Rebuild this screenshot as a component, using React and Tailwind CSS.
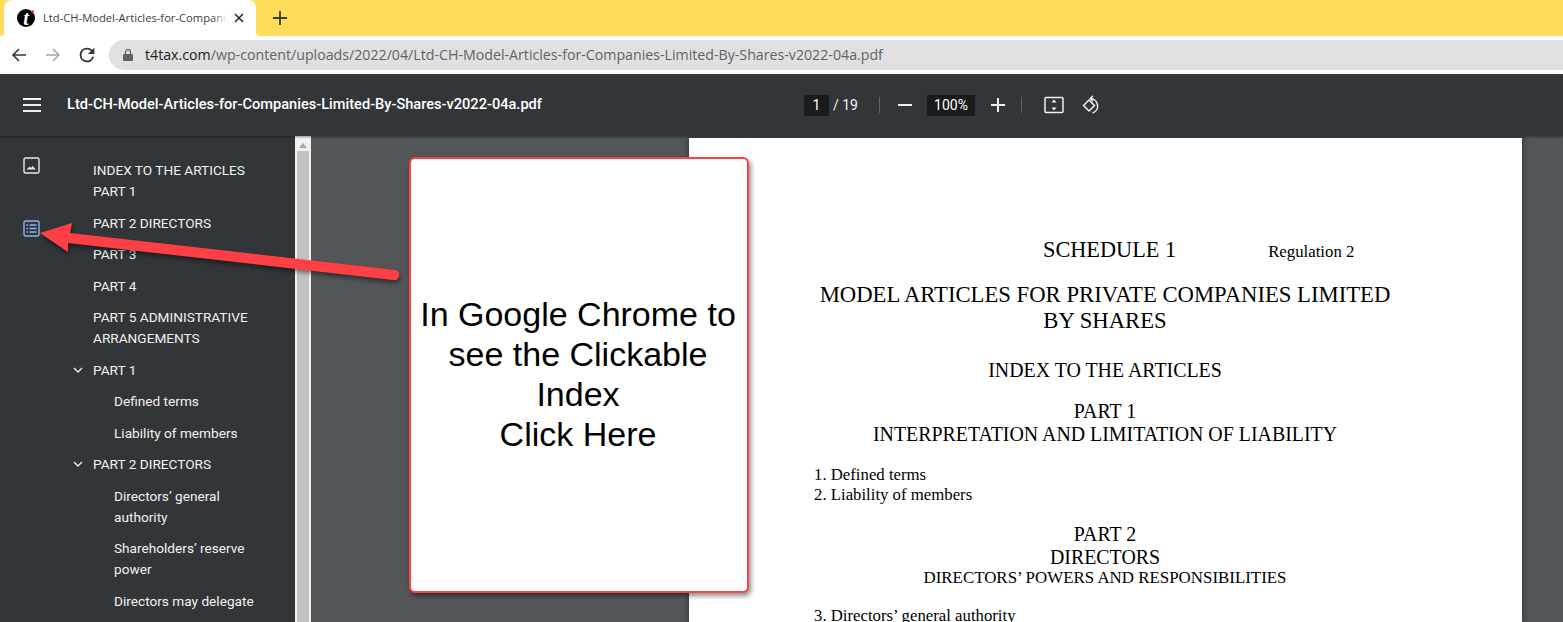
const outline = [
  { label: "INDEX TO THE ARTICLES", cls: "mt-[24px] pl-[93px]" },
  { label: "PART 1", cls: "pl-[93px]" },
  { label: "PART 2 DIRECTORS", cls: "mt-[11px] pl-[93px]" },
  { label: "PART 3", cls: "mt-[10px] pl-[93px]" },
  { label: "PART 4", cls: "mt-[11px] pl-[93px]" },
  { label: "PART 5 ADMINISTRATIVE ARRANGEMENTS", cls: "mt-[10px] pl-[93px] pr-[30px]" },
  { label: "PART 1", cls: "mt-[11px] pl-[93px]", open: true },
  { label: "Defined terms", cls: "mt-[10px] pl-[114px]" },
  { label: "Liability of members", cls: "mt-[11px] pl-[114px]" },
  { label: "PART 2 DIRECTORS", cls: "mt-[10px] pl-[93px]", open: true },
  { label: "Directors’ general authority", cls: "mt-[11px] pl-[114px] pr-[60px]" },
  { label: "Shareholders’ reserve power", cls: "mt-[10px] pl-[114px] pr-[40px]" },
  { label: "Directors may delegate", cls: "mt-[11px] pl-[114px] pr-[30px]" },
];

function BackIcon({ color }) {
  return (
    <svg width="16" height="16" viewBox="0 0 16 16" fill="none" stroke={color} strokeWidth="1.6">
      <path d="M15 8H2M8 2L2 8l6 6" />
    </svg>
  );
}

function BrowserBar() {
  return (
    <div>
      <div className="h-[36px] bg-[#ffdd5b] flex items-end pl-[4px]">
        <div className="relative h-[36px] w-[252px] bg-white rounded-t-[8px] flex items-center pl-[13px] pr-[10px]">
          <div className="absolute left-[-4px] bottom-0 w-[4px] h-[4px] bg-white" />
          <div className="absolute left-[-4px] bottom-0 w-[4px] h-[4px] bg-[#ffdd5b] rounded-br-[4px]" />
          <div className="absolute right-[-4px] bottom-0 w-[4px] h-[4px] bg-white" />
          <div className="absolute right-[-4px] bottom-0 w-[4px] h-[4px] bg-[#ffdd5b] rounded-bl-[4px]" />
          <div className="relative w-[18px] h-[18px] rounded-full bg-black flex items-center justify-center shrink-0 text-white font-['Liberation_Serif'] italic font-bold text-[20px] leading-none">
            t
            <span className="absolute right-[1px] top-[1px] w-[3px] h-[3px] rounded-full bg-[#e33]" />
          </div>
          <div className="relative ml-[8px] w-[184px] overflow-hidden whitespace-nowrap text-[11.2px] text-[#3c4043] font-['Open_Sans',sans-serif]">
            Ltd-CH-Model-Articles-for-Compani
            <div className="absolute right-0 top-0 bottom-0 w-[14px] bg-gradient-to-r from-transparent to-white" />
          </div>
          <svg className="ml-[6px] shrink-0" width="12" height="12" viewBox="0 0 12 12" stroke="#222" strokeWidth="1.5">
            <path d="M2 2l8 8M10 2l-8 8" />
          </svg>
        </div>
        <svg className="ml-[17px] mb-[11px]" width="14" height="14" viewBox="0 0 14 14" stroke="#3b3b30" strokeWidth="1.8">
          <path d="M7 0v14M0 7h14" />
        </svg>
      </div>
      <div className="h-[38px] bg-white flex items-center pl-[11px]">
        <BackIcon color="#333" />
        <div className="ml-[18px] rotate-180 flex">
          <BackIcon color="#a8a8a8" />
        </div>
        <svg className="ml-[15px]" width="22" height="22" viewBox="0 0 24 24" fill="#333">
          <path d="M17.65 6.35A7.95 7.95 0 0 0 12 4a8 8 0 1 0 7.73 10h-2.08A6 6 0 1 1 12 6c1.66 0 3.14.69 4.22 1.78L13 11h7V4l-2.35 2.35z" />
        </svg>
        <div className="ml-[11px] flex-1 h-[30px] mr-[-30px] rounded-full bg-[#e0e0e0] flex items-center pl-[14px] text-[14.2px] font-['Open_Sans',sans-serif]">
          <svg width="10" height="12" viewBox="0 0 10 12" fill="#5f6368">
            <path d="M1 5h8a1 1 0 0 1 1 1v5a1 1 0 0 1-1 1H1a1 1 0 0 1-1-1V6a1 1 0 0 1 1-1z" />
            <path d="M2.5 5V3.2a2.5 2.5 0 0 1 5 0V5" fill="none" stroke="#5f6368" strokeWidth="1.2" />
          </svg>
          <span className="ml-[12px] text-[#202124]">t4tax.com</span>
          <span className="text-[#5f6368]">/wp-content/uploads/2022/04/Ltd-CH-Model-Articles-for-Companies-Limited-By-Shares-v2022-04a.pdf</span>
        </div>
      </div>
    </div>
  );
}

function PdfToolbar() {
  return (
    <div className="relative z-10 h-[62px] bg-[#323639] shadow-[0_1px_2px_rgba(0,0,0,0.4)] flex items-center text-white font-['Roboto',sans-serif] text-[14px]">
      <svg className="ml-[23px] shrink-0" width="18" height="14" viewBox="0 0 18 14" fill="#f1f1f1">
        <path d="M0 0h18v2H0zM0 6h18v2H0zM0 12h18v2H0z" />
      </svg>
      <div className="ml-[26px] w-[737px] shrink-0 font-medium text-[14.6px] whitespace-nowrap">
        Ltd-CH-Model-Articles-for-Companies-Limited-By-Shares-v2022-04a.pdf
      </div>
      <div className="w-[25px] h-[21px] bg-[#191b1c] flex items-center justify-center">1</div>
      <div className="ml-[4px] text-[#f1f1f1]">/ 19</div>
      <div className="ml-[21px] w-px h-[16px] bg-[#5f6368]" />
      <svg className="ml-[18px]" width="14" height="14" viewBox="0 0 14 14" fill="#f1f1f1">
        <path d="M0 6h14v2H0z" />
      </svg>
      <div className="ml-[15px] w-[48px] h-[21px] bg-[#191b1c] flex items-center justify-center">100%</div>
      <svg className="ml-[16px]" width="14" height="14" viewBox="0 0 14 14" fill="#f1f1f1">
        <path d="M0 6h6V0h2v6h6v2H8v6H6V8H0z" />
      </svg>
      <div className="ml-[16px] w-px h-[16px] bg-[#5f6368]" />
      <svg className="ml-[22px]" width="20" height="18" viewBox="0 0 20 18" fill="none" stroke="#f1f1f1" strokeWidth="1.5">
        <rect x="1" y="1.5" width="18" height="15" rx="1" />
        <path d="M10 3.5l2.5 3h-5zM10 14.5l2.5-3h-5z" fill="#f1f1f1" stroke="none" />
      </svg>
      <svg className="ml-[18px]" width="20" height="20" viewBox="0 0 20 20" fill="none" stroke="#f1f1f1" strokeWidth="1.5">
        <path d="M7 5L1.5 10.5 7 16l5.5-5.5z" />
        <path d="M8.5 3.5a7.5 7.5 0 0 1 2 14.6" />
        <path d="M11 0.8L8.3 3.5l2.7 2.7" />
      </svg>
    </div>
  );
}

function Sidebar() {
  return (
    <div className="w-[295px] shrink-0 bg-[#323639] relative text-[13.65px] leading-[21px] text-[#f1f1f1] font-['Roboto',sans-serif] overflow-hidden">
      <svg className="absolute left-[23px] top-[21px]" width="17" height="17" viewBox="0 0 17 17" fill="none" stroke="#e8e8e8" strokeWidth="1.4">
        <rect x="1" y="1" width="15" height="15" rx="1.5" />
        <path d="M3.5 12.5l3-3 1.5 1.5 1.5-2 3.5 3.5z" fill="#e8e8e8" stroke="none" />
      </svg>
      <svg className="absolute left-[23px] top-[84px]" width="17" height="17" viewBox="0 0 17 17" fill="none" stroke="#8ab4f8" strokeWidth="1.4">
        <rect x="1" y="1" width="15" height="15" rx="1.5" />
        <path d="M3.5 5h1.5M6.5 5h7M3.5 8.5h1.5M6.5 8.5h7M3.5 12h1.5M6.5 12h7" />
      </svg>
      {outline.map((item, i) => (
        <div key={i} className={`relative ${item.cls}`}>
          {item.open && (
            <svg className="absolute left-[73px] top-[7px]" width="10" height="7" viewBox="0 0 10 7" fill="none" stroke="#f1f1f1" strokeWidth="1.4">
              <path d="M1 1l4 4 4-4" />
            </svg>
          )}
          {item.label}
        </div>
      ))}
    </div>
  );
}

function PdfPage() {
  return (
    <div className="mt-[2px] ml-[378px] w-[833px] shrink-0 bg-white shadow-[0_0_6px_rgba(0,0,0,0.5)] text-black font-['Liberation_Serif',serif] text-center">
      <div className="mt-[99px] h-[26px] flex pl-[354px] text-[22.3px] leading-[26px] whitespace-nowrap">
        <span>SCHEDULE 1</span>
        <span className="ml-[92px] mt-[2px] text-[16.8px]">Regulation 2</span>
      </div>
      <div className="mt-[19px] pr-[1px] text-[22.7px] leading-[26px] whitespace-nowrap">
        MODEL ARTICLES FOR PRIVATE COMPANIES LIMITED
        <br />
        BY SHARES
      </div>
      <div className="mt-[24px] pr-[1px] text-[19.9px] leading-[24px]">INDEX TO THE ARTICLES</div>
      <div className="mt-[17px] pr-[1px] text-[19.9px] leading-[24px]">PART 1</div>
      <div className="pr-[1px] text-[19.9px] leading-[22px]">INTERPRETATION AND LIMITATION OF LIABILITY</div>
      <div className="mt-[20px] pl-[125px] text-left text-[16.75px] leading-[20px]">
        <div>1. Defined terms</div>
        <div>2. Liability of members</div>
      </div>
      <div className="mt-[17px] pr-[1px] text-[19.9px] leading-[24px]">PART 2</div>
      <div className="pr-[1px] text-[19.9px] leading-[22px]">DIRECTORS</div>
      <div className="pr-[1px] text-[16.9px] leading-[20px]">DIRECTORS’ POWERS AND RESPONSIBILITIES</div>
      <div className="mt-[18px] pl-[125px] text-left text-[16.75px] leading-[20px]">3. Directors’ general authority</div>
    </div>
  );
}

function Callout() {
  return (
    <>
      <div className="absolute left-[409px] top-[157px] w-[340px] h-[436px] pb-[2px] pr-[2px] bg-white border-2 border-[#ff3f46] rounded-[6px] shadow-[2px_3px_5px_rgba(0,0,0,0.45)] flex items-center justify-center text-center text-black font-['Liberation_Sans',sans-serif] text-[34px] leading-[40px]">
        <div>
          In Google Chrome to
          <br />
          see the Clickable
          <br />
          Index
          <br />
          Click Here
        </div>
      </div>
      <svg className="absolute left-0 top-0 pointer-events-none drop-shadow-[1px_3px_2px_rgba(0,0,0,0.45)]" width="420" height="300" viewBox="0 0 420 300" fill="#ff3f46">
        <path d="M40 233L72 223L70 233L395 270Q400 271 399 276Q398 281 393 280L68 243L68 252Z" />
      </svg>
    </>
  );
}

export default function App() {
  return (
    <div className="relative w-[1563px] h-[622px] overflow-hidden flex flex-col bg-[#525659]">
      <BrowserBar />
      <PdfToolbar />
      <div className="flex flex-1 min-h-0 overflow-hidden">
        <Sidebar />
        <div className="w-[16px] shrink-0 bg-[#f1f1f1] flex flex-col items-center">
          <div className="mt-[7px] w-0 h-0 border-x-[4px] border-x-transparent border-b-[5px] border-b-[#a3a3a3]" />
          <div className="mt-[3px] w-[12px] flex-1 bg-[#c1c1c1]" />
        </div>
        <PdfPage />
      </div>
      <Callout />
    </div>
  );
}
